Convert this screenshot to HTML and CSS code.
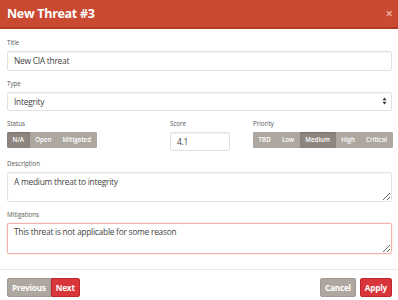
FILE: index.html
```html
<!DOCTYPE html>
<html>
<head>
<meta charset="utf-8">
<link rel="stylesheet" href="styles.css">
</head>
<body>
<div class="modal">
  <div class="modal-header">
    <h4 class="modal-title">New Threat #3</h4>
    <span class="close">&times;</span>
  </div>
  <div class="modal-body">
    <div class="form-group">
      <label class="lbl">Title</label>
      <div class="form-control">New CIA threat</div>
    </div>
    <div class="form-group">
      <label class="lbl">Type</label>
      <div class="form-control select">
        <span>Integrity</span>
        <svg class="arrows" width="5" height="8" viewBox="0 0 5 8"><path d="M0.5 3.2 L2.5 0.6 L4.5 3.2 Z M0.5 4.8 L2.5 7.4 L4.5 4.8 Z" fill="#333"/></svg>
      </div>
    </div>
    <div class="form-group row3">
      <div class="col">
        <label class="lbl">Status</label>
        <div class="btn-group">
          <span class="gbtn active">N/A</span><span class="gbtn">Open</span><span class="gbtn">Mitigated</span>
        </div>
      </div>
      <div class="col">
        <label class="lbl">Score</label>
        <div class="form-control score">4.1</div>
      </div>
      <div class="col">
        <label class="lbl">Priority</label>
        <div class="btn-group">
          <span class="gbtn">TBD</span><span class="gbtn">Low</span><span class="gbtn active">Medium</span><span class="gbtn">High</span><span class="gbtn">Critical</span>
        </div>
      </div>
    </div>
    <div class="form-group">
      <label class="lbl">Description</label>
      <textarea class="form-control ta desc">A medium threat to integrity</textarea>
    </div>
    <div class="form-group">
      <label class="lbl">Mitigations</label>
      <textarea class="form-control ta mit">This threat is not applicable for some reason</textarea>
    </div>
  </div>
  <div class="modal-footer">
    <div class="left">
      <span class="btn btn-default">Previous</span><span class="btn btn-danger">Next</span>
    </div>
    <div class="right">
      <span class="btn btn-default">Cancel</span><span class="btn btn-danger">Apply</span>
    </div>
  </div>
</div>
</body>
</html>
```
FILE: styles.css
```css
* { box-sizing: border-box; }
html, body { margin: 0; padding: 0; background: #fff; }
body {
  font-family: "Open Sans", "Liberation Sans", sans-serif;
  color: #333;
  width: 398px;
  height: 300px;
  overflow: hidden;
}
.modal { width: 398px; }
.modal-header {
  height: 29px;
  background: #ca4a31;
  border-bottom: 2px solid #b53a26;
  display: flex;
  align-items: center;
  justify-content: space-between;
  padding: 0 5px 0 7px;
}
.modal-title {
  margin: 0;
  color: #fff;
  font-size: 12.5px;
  font-weight: 700;
  letter-spacing: -0.3px;
}
.close {
  color: #efa99b;
  font-size: 13px;
  font-weight: 700;
  line-height: 1;
  margin-top: -1px;
}
.modal-body {
  padding: 8.5px 6px 15px 7px;
}
.form-group { margin-bottom: 8px; }
.form-group:last-child { margin-bottom: 0; }
.lbl {
  display: block;
  font-size: 6.2px;
  line-height: 9px;
  margin-bottom: 4px;
  color: #555;
}
.form-control {
  display: block;
  width: 100%;
  height: 20px;
  border: 1px solid #e2e2e2;
  border-radius: 2px;
  box-shadow: inset 0 1px 1px rgba(0,0,0,0.04);
  font-family: "Open Sans", "Liberation Sans", sans-serif;
  font-size: 8.4px;
  line-height: 18px;
  padding: 0 6px;
  color: #444;
  background: #fff;
  letter-spacing: -0.25px;
}
.select {
  height: 19px;
  line-height: 17px;
  display: flex;
  justify-content: space-between;
  align-items: center;
  padding-right: 4px;
}
.arrows { display: block; }
.row3 {
  display: grid;
  grid-template-columns: 163px 83px 1fr;
}
.score { width: 60px; height: 19px; line-height: 17px; }
.btn-group {
  display: flex;
  width: max-content;
  height: 16px;
  border-radius: 2px;
  overflow: hidden;
  background: #aea79f;
}
.gbtn {
  display: block;
  color: #fff;
  font-size: 6.2px;
  font-weight: 600;
  line-height: 16px;
  padding: 0 5.6px;
  background: #aea79f;
}
.gbtn.active {
  background: #8e867e;
  box-shadow: inset 0 1px 2px rgba(0,0,0,0.15);
}
.ta {
  resize: vertical;
  padding: 3px 6px;
  line-height: 12px;
  overflow: hidden;
}
.desc { height: 30px; }
.mit {
  height: 31px;
  padding-top: 2px;
  border-color: #f0b4aa;
  box-shadow: 0 0 2px rgba(223,56,44,0.25);
}
.modal-footer {
  border-top: 1px solid #e8e8e8;
  padding: 8px 6px 0 7px;
  display: flex;
  justify-content: space-between;
}
.left, .right { display: flex; }
.right .btn + .btn { margin-left: 4px; }
.btn {
  display: block;
  height: 19px;
  line-height: 17px;
  font-size: 8.2px;
  font-weight: 700;
  color: #fff;
  padding: 0 4px;
  border: 1px solid transparent;
  border-radius: 2px;
  letter-spacing: -0.2px;
}
.btn-default { background: #aea79f; border-color: #a29a92; }
.btn-danger { background: #d9363b; border-color: #c0272d; }
.left .btn-default { border-top-right-radius: 0; border-bottom-right-radius: 0; }
.left .btn-danger { border-top-left-radius: 0; border-bottom-left-radius: 0; }
```
